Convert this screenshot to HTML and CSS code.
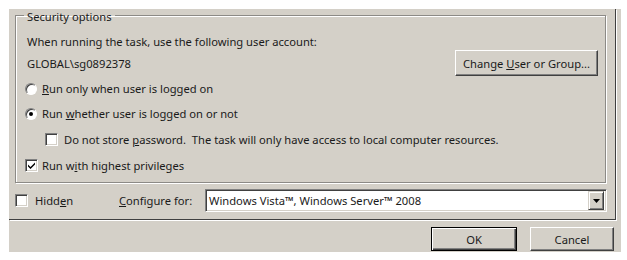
FILE: index.html
```html
<!DOCTYPE html>
<html>
<head>
<meta charset="utf-8">
<link rel="stylesheet" href="styles.css">
</head>
<body>
<div class="dialog">
  <div class="upper">
    <fieldset class="group">
      <legend class="legend">Security options</legend>
      <div class="line">When running the task, use the following user account:</div>
      <div class="account-row">
        <span>GLOBAL\sg0892378</span>
        <button class="btn change">Change <u>U</u>ser or Group...</button>
      </div>
      <div class="opt r1"><span class="radio"></span><span class="lbl"><u>R</u>un only when user is logged on</span></div>
      <div class="opt r2"><span class="radio on"><span class="dot"></span></span><span class="lbl">Run <u>w</u>hether user is logged on or not</span></div>
      <div class="opt c1"><span class="check"></span><span class="lbl">Do not store <u>p</u>assword.&nbsp; The task will only have access to local computer resources.</span></div>
      <div class="opt c2"><span class="check"><svg width="9" height="9" viewBox="0 0 9 9"><path d="M1 3.5 L3.5 6 L8 1.5 L8 3.5 L3.5 8 L1 5.5 Z" fill="#000"/></svg></span><span class="lbl">Run w<u>i</u>th highest privileges</span></div>
    </fieldset>
    <div class="config-row">
      <span class="check"></span><span class="hidden-lbl">Hidd<u>e</u>n</span>
      <span class="cfg-lbl"><u>C</u>onfigure for:</span>
      <div class="select">
        <span class="sel-text">Windows Vista™, Windows Server™ 2008</span>
        <span class="drop"><svg width="7" height="4" viewBox="0 0 7 4"><path d="M0 0 H7 L3.5 4 Z" fill="#000"/></svg></span>
      </div>
    </div>
  </div>
  <div class="footer">
    <button class="btn default">OK</button>
    <button class="btn cancel">Cancel</button>
  </div>
</div>
</body>
</html>
```

FILE: styles.css
```css
* { box-sizing: border-box; }
html, body { margin: 0; padding: 0; background: #fff; }
body {
  font-family: "Noto Sans", "Open Sans", sans-serif;
  font-size: 11.2px;
  color: #1a1a1a;
}
.dialog {
  margin: 9px 0 0 9px;
  width: 612px;
  height: 243px;
  background: #d4d0c8;
  display: flex;
  flex-direction: column;
}
.upper {
  width: 607px;
  height: 211px;
  border-right: 1px solid #404040;
  border-bottom: 1px solid #404040;
  box-shadow: 1px 1px 0 #fff;
  padding: 0 0 0 6px;
  display: flex;
  flex-direction: column;
}
.group {
  margin: 0;
  width: 591px;
  padding: 12px 7px 4px 11px;
  border: 1px solid #8c8a86;
  box-shadow: 1px 1px 0 #fff, inset 1px 1px 0 #fff;
  min-width: 0;
}
.legend {
  padding: 3px 3px 0;
  margin-left: -3px;
  line-height: 10px;
}
.line { height: 16px; line-height: 16px; }
.account-row {
  height: 26px;
  display: flex;
  align-items: center;
  justify-content: space-between;
}
.btn {
  font: inherit;
  color: #1a1a1a;
  background: #d4d0c8;
  border: 1px solid;
  border-color: #fff #404040 #404040 #fff;
  box-shadow: inset -1px -1px 0 #808080;
  padding: 0;
  margin: 0;
}
.change { width: 143px; height: 26px; }
.opt { display: flex; align-items: center; }
.r1, .r2 { height: 25px; }
.c1, .c2 { height: 26px; }
.radio {
  width: 12px; height: 12px;
  border-radius: 50%;
  background: #fff;
  border: 1px solid;
  border-color: #808080 #fff #fff #808080;
  box-shadow: inset 1px 1px 0 #404040;
  margin-left: -2px;
  margin-right: 5px;
  display: flex; align-items: center; justify-content: center;
  flex: none;
}
.dot { width: 4px; height: 4px; border-radius: 50%; background: #000; }
.check {
  width: 13px; height: 13px;
  background: #fff;
  border: 1px solid;
  border-color: #808080 #fff #fff #808080;
  box-shadow: inset 1px 1px 0 #404040, inset -1px -1px 0 #d4d0c8;
  display: flex; align-items: center; justify-content: center;
  flex: none;
}
.c1 .check { margin-left: 18px; margin-right: 6px; }
.c2 .check { margin-left: -2px; margin-right: 4px; }
.config-row {
  margin-top: 6px;
  height: 23px;
  display: flex;
  align-items: center;
}
.hidden-lbl { margin-left: 7px; width: 84px; }
.cfg-lbl { width: 86px; }
.select {
  width: 402px;
  height: 23px;
  background: #fff;
  border: 1px solid;
  border-color: #808080 #fff #fff #808080;
  box-shadow: inset 1px 1px 0 #404040, inset -1px -1px 0 #d4d0c8;
  display: flex;
  align-items: center;
  justify-content: space-between;
  padding: 2px 2px 2px 3px;
}
.drop {
  width: 16px; height: 19px;
  background: #d4d0c8;
  border: 1px solid;
  border-color: #d4d0c8 #404040 #404040 #d4d0c8;
  box-shadow: inset 1px 1px 0 #fff, inset -1px -1px 0 #808080;
  display: flex; align-items: center; justify-content: center;
}
.footer {
  flex: 1;
  display: flex;
  justify-content: flex-end;
  align-items: flex-start;
  gap: 13px;
  padding: 7px 7px 0 0;
}
.default {
  width: 86px; height: 24px;
  border: 1px solid #000;
  box-shadow: inset 1px 1px 0 #fff, inset -1px -1px 0 #404040, inset -2px -2px 0 #808080;
}
.cancel { width: 84px; height: 24px; }
```
